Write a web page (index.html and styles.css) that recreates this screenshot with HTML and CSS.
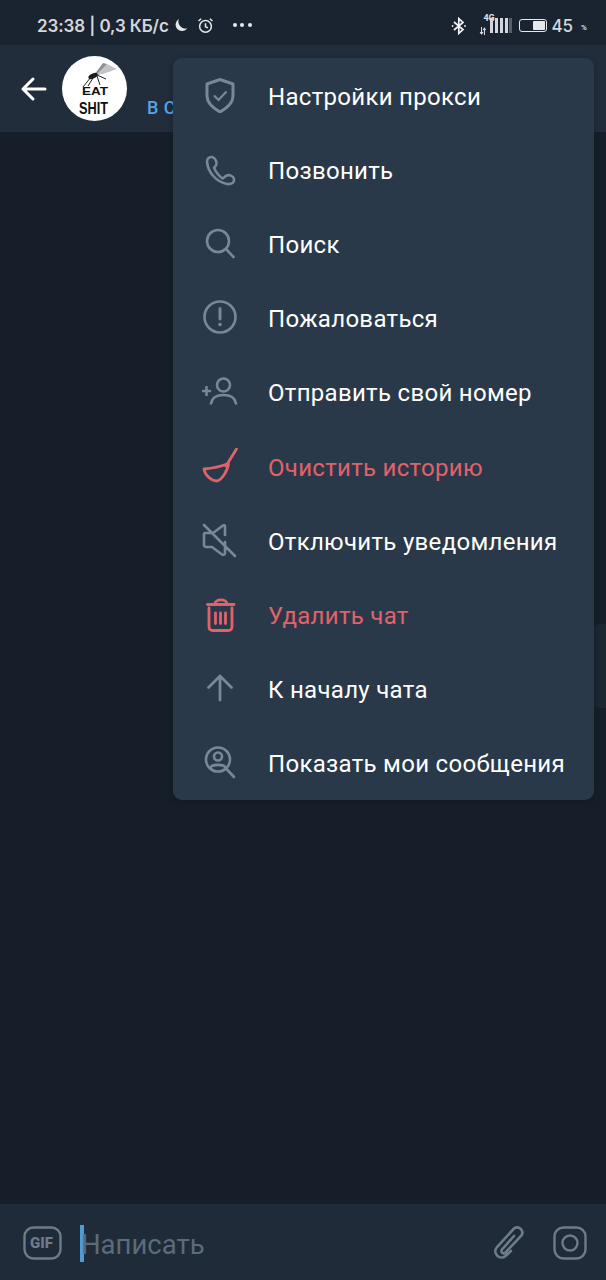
FILE: index.html
```html
<!DOCTYPE html>
<html>

<head>
    <title>Chat</title>
    <link rel="stylesheet" href="styles.css">
</head>

<body>
    <div class="screen">
        <div class="status-bar">
            <div class="status-left">
                <span class="status-text">23:38 | 0,3 КБ/с</span>
                <svg class="moon" width="15" height="15" viewBox="0 0 14 14"><path d="M5.500 1A6 6 0 1 0 13.400 9.600 6.500 6.500 0 0 1 5.500 1Z" fill="#e6e9ec"/></svg>
                <svg class="alarm" width="17" height="17" viewBox="0 0 18 18" fill="none" stroke="#e6e9ec" stroke-width="1.600"><circle cx="9" cy="10" r="6.200"/><path d="M9 6.500V10.300L11.600 11.500M1.600 4.200 4.400 1.800M16.400 4.200 13.600 1.800"/></svg>
                <span class="status-dots"><i></i><i></i><i></i></span>
            </div>
            <div class="status-right">
                <svg class="bluetooth" width="16" height="18" viewBox="0 0 16 18" fill="none" stroke="#f0f2f4" stroke-width="1.700"><path d="M3 5 12 12.600 7.800 16.400V1.600L12 5.400 3 13"/><circle cx="1.600" cy="9" r=".9" fill="#f0f2f4" stroke="none"/><circle cx="14" cy="9" r=".9" fill="#f0f2f4" stroke="none"/></svg>
                <div class="signal">
                    <span class="signal-net">4G</span>
                    <svg class="signal-arrows" width="8" height="8" viewBox="0 0 8 11" fill="none" stroke="#dfe3e6" stroke-width="1.400"><path d="M2 0V9M0 7 2 9.500 4 7M6 11V2M4.400 4 6 1.500 7.600 4"/></svg>
                    <div class="signal-bars"><i></i><i></i><i></i><i></i><i class="off"></i></div>
                </div>
                <div class="battery"><div class="battery-level"></div></div>
                <span class="battery-text">45</span>
                <span class="battery-pct">%</span>
            </div>
        </div>

        <div class="chat-header">
            <svg class="back" width="28" height="26" viewBox="0 0 28 26" fill="none" stroke="#fff" stroke-width="3" stroke-linecap="round" stroke-linejoin="round"><path d="M3 13H25M13 3 3 13 13 23"/></svg>
            <div class="avatar">
                <svg width="65" height="65" viewBox="0 0 65 65">
                    <g fill="none" stroke="#222" stroke-width="1">
                        <path d="M29 21 21 31M31 22 26 30M35 20 38 29M35 19 44 23"/>
                    </g>
                    <path d="M32 19 41 7 45 8 37 19Z" fill="#8d9094"/>
                    <path d="M35 18 45 8 55 13 41 18Z" fill="#c2c4c6"/>
                    <ellipse cx="31" cy="20" rx="5" ry="2.400" transform="rotate(-25 31 20)" fill="#1c1c1c"/>
                    <text x="20" y="39" class="avatar-eat" textLength="26" lengthAdjust="spacingAndGlyphs">EAT</text>
                    <text x="17" y="58" class="avatar-shit" textLength="29" lengthAdjust="spacingAndGlyphs">SHIT</text>
                </svg>
            </div>
            <span class="last-seen">В СЕТИ</span>
        </div>

        <div class="chat-body">
            <div class="bubble"></div>
        </div>

        <div class="composer">
            <svg class="gif-icon" width="40" height="34" viewBox="0 0 40 34" fill="none"><rect x="1.500" y="1.500" width="36" height="31" rx="9" stroke="#6d7b8a" stroke-width="2.400"/></svg>
            <span class="gif-text">GIF</span>
            <div class="input">
                <span class="caret"></span>
                <span class="placeholder">Написать</span>
            </div>
            <svg class="clip" width="34" height="36" viewBox="0 0 34 36" fill="none" stroke="#6d7b8a" stroke-width="2.600" stroke-linecap="round"><path d="M22 11 10 24.500C8 27 11.500 29.500 13.500 27.500L29 11C33 6 27 0 22 3.500L5 22C0 28 7.500 36 13.500 31L19 26"/></svg>
            <svg class="camera" width="34" height="34" viewBox="0 0 34 34" fill="none" stroke="#6d7b8a" stroke-width="2.400"><rect x="1.500" y="1.500" width="31" height="31" rx="9"/><circle cx="17" cy="17" r="7.500"/></svg>
        </div>

        <div class="menu">
            <div class="menu-item">
                <svg class="menu-icon" width="36" height="36" viewBox="0 0 36 36" fill="none"><path d="M18 2.500 31 7V19C31 26 25 31 18 35 11 31 5 26 5 19V7Z" stroke="#76889a" stroke-width="3" stroke-linejoin="round"/><path d="M12 18.500 16.500 23 24.500 14.500" stroke="#76889a" stroke-width="2.200"/></svg>
                <span>Настройки прокси</span>
            </div>
            <div class="menu-item">
                <svg class="menu-icon" width="36" height="36" viewBox="0 0 36 36" fill="none"><path d="M10 6C7 5.500 5 8 5 11 6 21 14 31 25 33 30 33.500 32.500 31.500 32 28 31.500 25 27 23 24 25 22 26 21.500 27.500 20.500 27.500 17 25 14 21 12 17 12.500 15.500 14.500 15 14.500 12.500 14.500 9.500 12.500 6.500 10 6Z" stroke="#76889a" stroke-width="2.600" stroke-linejoin="round"/></svg>
                <span>Позвонить</span>
            </div>
            <div class="menu-item">
                <svg class="menu-icon" width="36" height="36" viewBox="0 0 36 36" fill="none" stroke="#76889a" stroke-width="2.600" stroke-linecap="round"><circle cx="16" cy="15" r="11"/><path d="M24 23 31.500 31"/></svg>
                <span>Поиск</span>
            </div>
            <div class="menu-item">
                <svg class="menu-icon" width="36" height="36" viewBox="0 0 36 36" fill="none"><circle cx="18" cy="17" r="15.500" stroke="#76889a" stroke-width="2.600"/><path d="M18 8.500V19" stroke="#76889a" stroke-width="3" stroke-linecap="round"/><circle cx="18" cy="24.500" r="1.800" fill="#76889a"/></svg>
                <span>Пожаловаться</span>
            </div>
            <div class="menu-item">
                <svg class="menu-icon" width="36" height="36" viewBox="0 0 36 36" fill="none" stroke="#76889a" stroke-width="2.600" stroke-linecap="round"><circle cx="21.500" cy="11" r="6.500"/><path d="M9 29.500C10 23 15 21 21.500 21S33 23 34 29.500M1 17H8M4.500 13V21"/></svg>
                <span>Отправить свой номер</span>
            </div>
            <div class="menu-item danger">
                <svg class="menu-icon" width="36" height="36" viewBox="0 0 36 36" fill="none" stroke="#e0626b" stroke-width="2.800" stroke-linecap="round" stroke-linejoin="round"><path d="M34.500 1 24 18M2 21Q15 20 26.500 15.500C26 22 20 32 15 33 9 33 3 27 2 21Z"/></svg>
                <span>Очистить историю</span>
            </div>
            <div class="menu-item">
                <svg class="menu-icon" width="36" height="36" viewBox="0 0 36 36" fill="none" stroke="#76889a" stroke-width="2.600" stroke-linejoin="round" stroke-linecap="round"><path d="M2 3 33 34M21 3.500 11 11H3C2 11 2 12 2 13V23C2 24 3 25 4 25H10L20 32.500C21.500 33.500 23 32.500 23 31V20M23 13V4.500C23 3 22 3 21 3.500"/></svg>
                <span>Отключить уведомления</span>
            </div>
            <div class="menu-item danger">
                <svg class="menu-icon" width="36" height="36" viewBox="0 0 36 36" fill="none" stroke="#e0626b" stroke-width="2.800" stroke-linecap="round"><path d="M5.500 7.500H32M13 7C13 1.500 25 1.500 25 7"/><path d="M7 11V29.500C7 32 8.500 33.500 11 33.500H26C28.500 33.500 30 32 30 29.500V11"/><path d="M13.500 16V26.500M18.500 16V26.500M23.500 16V26.500"/></svg>
                <span>Удалить чат</span>
            </div>
            <div class="menu-item">
                <svg class="menu-icon" width="36" height="36" viewBox="0 0 36 36" fill="none" stroke="#76889a" stroke-width="2.800" stroke-linecap="round" stroke-linejoin="round"><path d="M18 29V5M6.500 16.500 18 5 29.500 16.500"/></svg>
                <span>К началу чата</span>
            </div>
            <div class="menu-item">
                <svg class="menu-icon" width="36" height="36" viewBox="0 0 36 36" fill="none" stroke="#76889a" stroke-width="2.600" stroke-linecap="round"><circle cx="16" cy="14.500" r="12"/><circle cx="16" cy="11.500" r="4"/><path d="M8.500 22.500C10 19 22 19 23.500 22.500M24.500 24 32 32"/></svg>
                <span>Показать мои сообщения</span>
            </div>
        </div>
    </div>
</body>

</html>
```

FILE: styles.css
```css
html, body {
    margin: 0;
    padding: 0;
}

body {
    font-family: Roboto, "Noto Sans", sans-serif;
    background: #161f29;
    color: #fff;
}

.screen {
    position: relative;
    width: 606px;
    height: 1280px;
    overflow: hidden;
    display: flex;
    flex-direction: column;
}

/* status bar */
.status-bar {
    height: 45px;
    background: #1a2430;
    display: flex;
    justify-content: space-between;
    align-items: center;
    padding: 6px 19px 0 37px;
    box-sizing: border-box;
}

.status-left,
.status-right {
    display: flex;
    align-items: center;
}

.status-text {
    font-family: Inter, Roboto, sans-serif;
    font-size: 17px;
    font-weight: 600;
    letter-spacing: -0.1px;
    color: #d3d7dc;
}

.moon {
    margin-left: 4px;
}

.alarm {
    margin-left: 9px;
}

.status-dots {
    display: flex;
    gap: 3.500px;
    margin-left: 19px;
    margin-top: -1px;
}

.status-dots i {
    width: 4px;
    height: 4px;
    border-radius: 50%;
    background: #e6e9ec;
}

.bluetooth {
    margin-right: 12px;
}

.signal {
    position: relative;
    width: 33px;
    height: 24px;
    margin-right: 7px;
}

.signal-net {
    position: absolute;
    left: 4px;
    top: -1px;
    font-size: 9px;
    font-weight: 700;
    color: #dfe3e6;
}

.signal-arrows {
    position: absolute;
    left: 0;
    bottom: 3px;
}

.signal-bars {
    position: absolute;
    right: 0;
    bottom: 5px;
    display: flex;
    gap: 1.750px;
}

.signal-bars i {
    width: 3px;
    height: 15px;
    background: #d3d7dc;
}

.signal-bars i.off {
    background: #565f6a;
}

.battery {
    width: 24px;
    height: 9px;
    border: 1.500px solid #e6e9ec;
    border-radius: 3px;
    padding: 1px;
    display: flex;
    justify-content: flex-end;
}

.battery-level {
    width: 12px;
    background: #e6e9ec;
    border-radius: 1px;
}

.battery-text {
    margin-left: 4px;
    font-family: Inter, Roboto, sans-serif;
    font-size: 17px;
    font-weight: 500;
    color: #d3d7dc;
}

.battery-pct {
    margin-left: 8px;
    margin-top: 4px;
    font-size: 8px;
    font-weight: 700;
    color: #d3d7dc;
}

/* chat header */
.chat-header {
    height: 87px;
    background: #212d3b;
    display: flex;
    align-items: center;
    padding-left: 20px;
    box-sizing: border-box;
}

.back {
    flex: none;
}

.avatar {
    width: 65px;
    height: 65px;
    margin-left: 14px;
    margin-top: -1px;
    border-radius: 50%;
    background: #fff;
    flex: none;
}

.avatar svg {
    display: block;
}

.avatar-eat,
.avatar-shit {
    font-family: "Liberation Sans", sans-serif;
    font-weight: 700;
    fill: #111;
}

.avatar-eat {
    font-size: 11px;
}

.avatar-shit {
    font-size: 17px;
}

.last-seen {
    margin-left: 20px;
    margin-top: 38px;
    font-size: 18px;
    font-weight: 500;
    letter-spacing: 0.500px;
    white-space: nowrap;
    color: #5aa3e0;
}

/* chat */
.chat-body {
    flex: 1;
    position: relative;
}

.bubble {
    position: absolute;
    left: 590px;
    top: 492px;
    width: 40px;
    height: 84px;
    border-radius: 10px;
    background: #1c2732;
}

/* composer */
.composer {
    height: 76px;
    background: #1f2b38;
    display: flex;
    align-items: center;
    padding: 2px 19px 0 23px;
    box-sizing: border-box;
    position: relative;
}

.gif-icon {
    flex: none;
}

.gif-text {
    position: absolute;
    left: 30px;
    top: 30px;
    font-size: 15px;
    font-weight: 900;
    color: #6d7b8a;
}

.input {
    flex: 1;
    display: flex;
    align-items: center;
    margin-left: 17px;
}

.caret {
    width: 4px;
    height: 37px;
    background: #4f9bd9;
}

.placeholder {
    margin-left: -3px;
    padding-top: 2px;
    font-size: 27.500px;
    color: #5c6b7a;
}

.clip {
    margin-right: 27px;
    flex: none;
}

.camera {
    flex: none;
}

/* popup menu */
.menu {
    position: absolute;
    left: 173px;
    top: 58px;
    width: 421px;
    height: 742px;
    background: #2a3949;
    border-radius: 9px;
    box-shadow: 0 2px 6px rgba(0, 0, 0, 0.25);
    display: flex;
    flex-direction: column;
    overflow: hidden;
}

.menu-item {
    flex: 1;
    display: flex;
    align-items: center;
    padding-left: 29px;
    font-size: 24px;
    letter-spacing: 0.300px;
    color: #fff;
}

.menu-item span {
    margin-left: 30px;
    margin-top: 3px;
    white-space: nowrap;
}

.menu-item.danger {
    color: #e0626b;
}

.menu-icon {
    flex: none;
}
```
